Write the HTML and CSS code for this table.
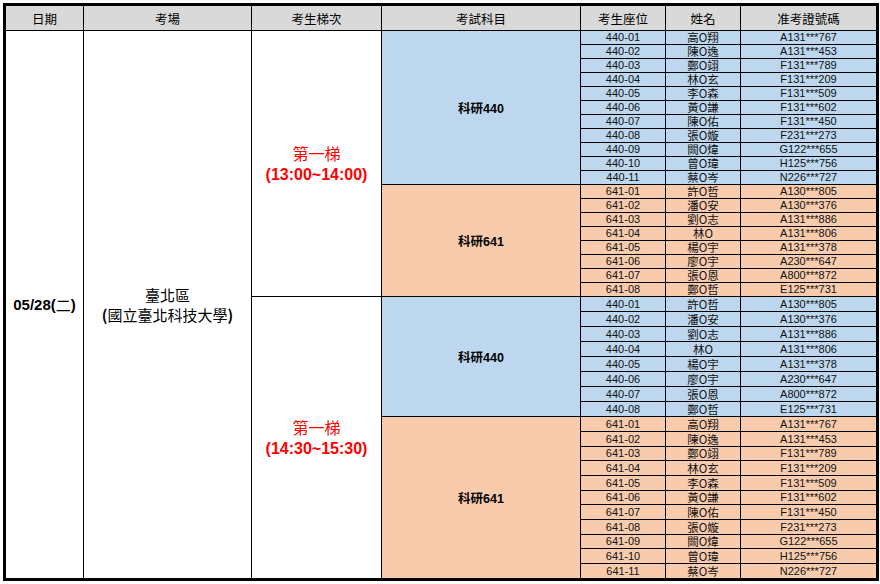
FILE: index.html
```html
<!DOCTYPE html>
<html lang="zh-Hant">
<head>
<meta charset="utf-8">
<title>考生座位表</title>
<link rel="stylesheet" href="styles.css">
</head>
<body>
<div class="sheet">
  <div class="hd">日期</div>
  <div class="hd">考場</div>
  <div class="hd">考生梯次</div>
  <div class="hd">考試科目</div>
  <div class="hd">考生座位</div>
  <div class="hd">姓名</div>
  <div class="hd">准考證號碼</div>

  <div class="date span38"><b>05/28(</b>二<b>)</b></div>
  <div class="venue span38"><span>臺北區</span><span><b>(</b>國立臺北科技大學<b>)</b></span></div>
  <div class="session span19"><span>第一梯</span><b>(13:00~14:00)</b></div>
  <div class="subject blue span11">科研440</div>
  <div class="c seat blue">440-01</div><div class="c name blue">高O翔</div><div class="c id blue">A131***767</div>
  <div class="c seat blue">440-02</div><div class="c name blue">陳O逸</div><div class="c id blue">A131***453</div>
  <div class="c seat blue">440-03</div><div class="c name blue">鄭O翊</div><div class="c id blue">F131***789</div>
  <div class="c seat blue">440-04</div><div class="c name blue">林O玄</div><div class="c id blue">F131***209</div>
  <div class="c seat blue">440-05</div><div class="c name blue">李O森</div><div class="c id blue">F131***509</div>
  <div class="c seat blue">440-06</div><div class="c name blue">黃O謙</div><div class="c id blue">F131***602</div>
  <div class="c seat blue">440-07</div><div class="c name blue">陳O佑</div><div class="c id blue">F131***450</div>
  <div class="c seat blue">440-08</div><div class="c name blue">張O嫙</div><div class="c id blue">F231***273</div>
  <div class="c seat blue">440-09</div><div class="c name blue">闕O煒</div><div class="c id blue">G122***655</div>
  <div class="c seat blue">440-10</div><div class="c name blue">曾O瑋</div><div class="c id blue">H125***756</div>
  <div class="c seat blue">440-11</div><div class="c name blue">蔡O岑</div><div class="c id blue">N226***727</div>

  <div class="subject orange span8">科研641</div>
  <div class="c seat orange">641-01</div><div class="c name orange">許O哲</div><div class="c id orange">A130***805</div>
  <div class="c seat orange">641-02</div><div class="c name orange">潘O安</div><div class="c id orange">A130***376</div>
  <div class="c seat orange">641-03</div><div class="c name orange">劉O志</div><div class="c id orange">A131***886</div>
  <div class="c seat orange">641-04</div><div class="c name orange">林O</div><div class="c id orange">A131***806</div>
  <div class="c seat orange">641-05</div><div class="c name orange">楊O宇</div><div class="c id orange">A131***378</div>
  <div class="c seat orange">641-06</div><div class="c name orange">廖O宇</div><div class="c id orange">A230***647</div>
  <div class="c seat orange">641-07</div><div class="c name orange">張O恩</div><div class="c id orange">A800***872</div>
  <div class="c seat orange">641-08</div><div class="c name orange">鄭O哲</div><div class="c id orange">E125***731</div>

  <div class="session span19"><span>第一梯</span><b>(14:30~15:30)</b></div>
  <div class="subject blue span8">科研440</div>
  <div class="c seat blue">440-01</div><div class="c name blue">許O哲</div><div class="c id blue">A130***805</div>
  <div class="c seat blue">440-02</div><div class="c name blue">潘O安</div><div class="c id blue">A130***376</div>
  <div class="c seat blue">440-03</div><div class="c name blue">劉O志</div><div class="c id blue">A131***886</div>
  <div class="c seat blue">440-04</div><div class="c name blue">林O</div><div class="c id blue">A131***806</div>
  <div class="c seat blue">440-05</div><div class="c name blue">楊O宇</div><div class="c id blue">A131***378</div>
  <div class="c seat blue">440-06</div><div class="c name blue">廖O宇</div><div class="c id blue">A230***647</div>
  <div class="c seat blue">440-07</div><div class="c name blue">張O恩</div><div class="c id blue">A800***872</div>
  <div class="c seat blue">440-08</div><div class="c name blue">鄭O哲</div><div class="c id blue">E125***731</div>

  <div class="subject orange span11">科研641</div>
  <div class="c seat orange">641-01</div><div class="c name orange">高O翔</div><div class="c id orange">A131***767</div>
  <div class="c seat orange">641-02</div><div class="c name orange">陳O逸</div><div class="c id orange">A131***453</div>
  <div class="c seat orange">641-03</div><div class="c name orange">鄭O翊</div><div class="c id orange">F131***789</div>
  <div class="c seat orange">641-04</div><div class="c name orange">林O玄</div><div class="c id orange">F131***209</div>
  <div class="c seat orange">641-05</div><div class="c name orange">李O森</div><div class="c id orange">F131***509</div>
  <div class="c seat orange">641-06</div><div class="c name orange">黃O謙</div><div class="c id orange">F131***602</div>
  <div class="c seat orange">641-07</div><div class="c name orange">陳O佑</div><div class="c id orange">F131***450</div>
  <div class="c seat orange">641-08</div><div class="c name orange">張O嫙</div><div class="c id orange">F231***273</div>
  <div class="c seat orange">641-09</div><div class="c name orange">闕O煒</div><div class="c id orange">G122***655</div>
  <div class="c seat orange">641-10</div><div class="c name orange">曾O瑋</div><div class="c id orange">H125***756</div>
  <div class="c seat orange">641-11</div><div class="c name orange">蔡O岑</div><div class="c id orange">N226***727</div>
</div>
</body>
</html>
```
FILE: styles.css
```css
html, body {
  margin: 0;
  padding: 0;
  background: #ffffff;
}
body {
  padding: 3px;
  font-family: "Liberation Sans", "Noto Sans CJK TC", sans-serif;
  color: #000;
}
.sheet {
  display: grid;
  grid-template-columns: 77px 167px 129px 198px 84px 74px 135px;
  grid-template-rows:
    24px
    repeat(19, 13px)
    repeat(8, 14px)
    14px 14px 13px 14px 14px 13px 14px 14px 13px 14px 14px;
  gap: 1px;
  width: max-content;
  background: #000;
  border: 3px solid #000;
}
.sheet > div {
  background: #fff;
  display: flex;
  align-items: center;
  justify-content: center;
  text-align: center;
}
.hd {
  background: #d9d9d9 !important;
  font-family: "Noto Sans CJK TC", sans-serif;
  font-size: 12.5px;
}
.span38 { grid-row: span 38; }
.span19 { grid-row: span 19; }
.span11 { grid-row: span 11; }
.span8 { grid-row: span 8; }
.date {
  font-size: 15px;
  font-family: "Liberation Sans", "Noto Sans CJK TC", sans-serif;
}
.venue, .session {
  flex-direction: column;
  font-size: 15px;
  line-height: 20px;
}
.venue span, .session span {
  font-family: "Noto Sans CJK TC", sans-serif;
}
.session {
  color: #ff0000;
  font-size: 16px;
  line-height: 21px;
  padding-top: 1px;
}
.subject {
  font-weight: bold;
  font-size: 12.5px;
}
.blue { background: #bdd7ee !important; }
.orange { background: #f8cbad !important; }
.c {
  font-size: 11px;
  line-height: 13px;
  color: #111;
}
.name {
  font-family: "Noto Sans CJK TC", sans-serif;
  font-size: 11.5px;
}
```
